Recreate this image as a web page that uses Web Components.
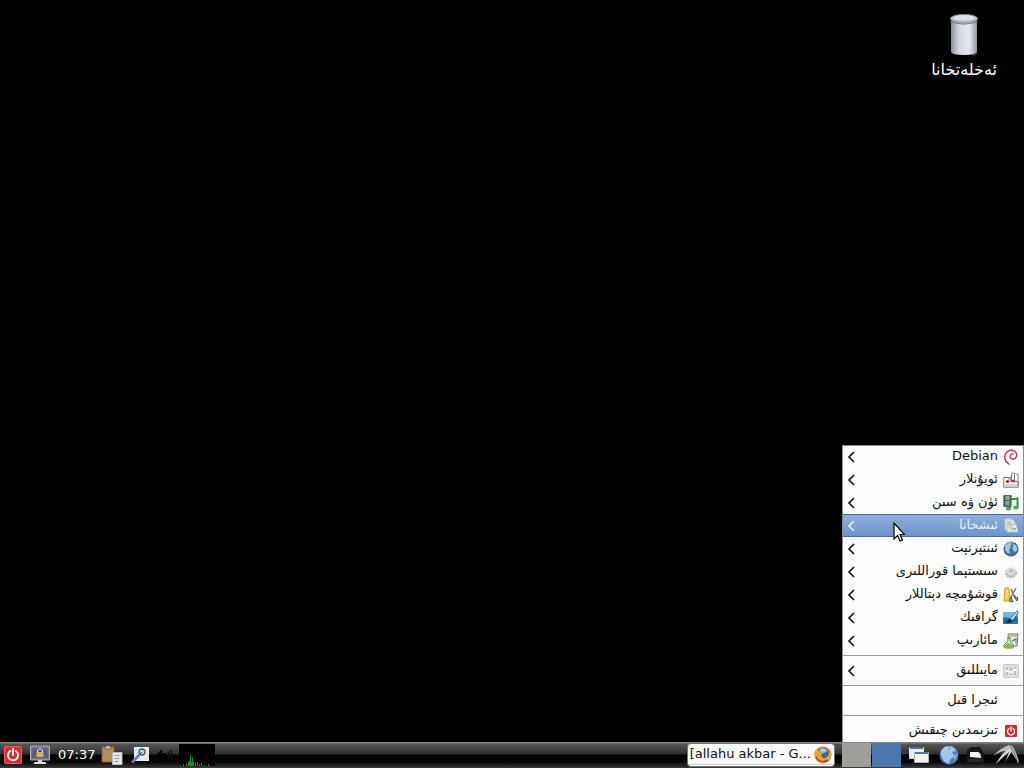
<!DOCTYPE html>
<html lang="ug" dir="rtl">
<head>
<meta charset="utf-8">
<title>LXDE</title>
<style>
html, body { margin: 0; height: 100%; background: #000; }
body { font: 13px/23px "DejaVu Sans", sans-serif; }
</style>
</head>
<body>
<lx-desktop></lx-desktop>
<script>
const ICONS = {
  debian: `<svg viewBox="0 0 16 16" fill="none" stroke="#c2325c" stroke-linecap="round"><path stroke-width="1.4" d="M5.5 14.8C1.5 12 .8 7.500 2.600 4.500 4.500 1 9.500.3 12.300 2.800c2.200 2.200 1.800 5.400-.7 6.800-1.700 1-4.600.4-4.500-1.900.1-2 1.800-3 3-2.700"/><path stroke-width=".7" d="M2 8C2 4 5 1 9 1.200M8 9.200c1 1.200 3 1 4 .2M4 13c1 1.500 1.500 2 2.500 2.500"/></svg>`,
  games: `<svg viewBox="0 0 16 16"><path d="M.8 5.500h7v4h7.500v5.700H.8z" fill="#f8f8f8" stroke="#777"/><path d="M6 10V7q0-1-1-1" fill="none" stroke="#999"/><circle cx="4.500" cy="9.500" r="1.600" fill="#c51d28"/><path d="M8.500 1.500q1.500-1.500 3 0V9h-3z" fill="#fff" stroke="#777"/><path d="M12.500 2H15v12" fill="none" stroke="#888"/><circle cx="10.300" cy="9" r="1.600" fill="#cc2635"/><path d="M2 13h12" stroke="#aaa"/></svg>`,
  media: `<svg viewBox="0 0 16 16"><path d="M.5 0h8v12h-8z" fill="#59656a"/><path d="M2.500 1h4v4h-4zM2.500 6h4v4h-4z" fill="#89a49b"/><path d="M1 1v10M8 1v10" stroke="#222" stroke-dasharray="1 1"/><path d="M6.500 4.500l8-1v9" fill="none" stroke="#318c45" stroke-width="2"/><path d="M7 4v9" stroke="#318c45" stroke-width="1.600"/><ellipse cx="5.500" cy="13.400" rx="2.600" ry="2" fill="#48a65a"/><ellipse cx="12.800" cy="12.400" rx="2.600" ry="2" fill="#48a65a"/></svg>`,
  office: `<svg viewBox="0 0 16 16"><path d="M2 1h7l3 3v8H2z" fill="#dbe2e9" stroke="#b0bfcd"/><path d="M4 4h4M4 6h4" stroke="#9eafbf"/><path d="M4 7l9-1 2 8H4z" fill="#e9e8df" stroke="#b7bec4"/><circle cx="8" cy="9" r="2.500" fill="#c8d1d1"/><path d="M9 11h4" stroke="#a6afb8" stroke-width="2"/></svg>`,
  globe: `<svg viewBox="0 0 16 16"><circle cx="8" cy="8" r="7" fill="#4776a8" stroke="#38516f"/><path d="M3 4l4-2.500 2 2-2 1 1 2-2 2 1 3-2 1-3-4zM10 3l3 1 1.500 4-2 3-2-1-1-3 1-2z" fill="#a9c6df"/><path d="M2 6a6 6 0 0 1 9-4" fill="none" stroke="#dceaf5" stroke-opacity=".7"/></svg>`,
  gear: `<svg viewBox="0 0 16 16"><ellipse cx="8" cy="9" rx="5" ry="4.300" fill="#bbb" stroke="#b5b5b5" stroke-width="2" stroke-dasharray="2 1"/><ellipse cx="8" cy="7.500" rx="5" ry="4" fill="#dadada"/><ellipse cx="8" cy="7" rx="2" ry="1.400" fill="#bbb"/></svg>`,
  tools: `<svg viewBox="0 0 16 16"><path d="M2 1h4l1 13H1z" fill="#f0d04b" stroke="#d0a62b"/><path d="M3 4h2M3 7h2M3 10h2" stroke="#fff3a0"/><path d="M8 2l4 9M13 1L8 10" stroke="#777" stroke-width="1.500"/><path d="M8 10l-2 4 4 1zM11 9l4 2-1 3z" fill="#c4a236" stroke="#5e5840"/></svg>`,
  graphics: `<svg viewBox="0 0 16 16"><path d="M0 2h15v12H0z" fill="#2c78ab"/><path d="M0 2h15v4L8 8 0 7z" fill="#79b7dc"/><path d="M1 11l7-2 6 2" stroke="#194b70" fill="none"/><path d="M6 11l2-3 6-7 1.500 1L10 10z" fill="#d5e2e8" stroke="#284759" stroke-width=".7"/><path d="M3 13l3-4 4 1-2 3z" fill="#163044"/></svg>`,
  education: `<svg viewBox="0 0 16 16"><path d="M5 1h10l-1 12H6z" fill="#eee" stroke="#72746b"/><path d="M6 3h8M13 5v6" stroke="#8b8375"/><path d="M4 5h4M5 5v3l-4 4q-1 3 2 3h6q3 0 1-3L7 8V5" fill="#e8f3df" stroke="#69834d"/><path d="M2 12l3-2 5 2q0 3-2 3H3q-2 0-1-3z" fill="#83bd48"/><path d="M9 8l4-2" stroke="#66873d" stroke-width="1.500"/></svg>`,
  prefs: `<svg viewBox="0 0 16 16"><rect x=".5" y="1.500" width="15" height="13" rx="1" fill="#dedede" stroke="#cbcbcb"/><path d="M4 4v8M8 4v8M12 4v8" stroke="#b5b5b5" stroke-width="1.500"/><path d="M2.500 8h3M6.500 9h3M10.500 7h3" stroke="#fff" stroke-width="2"/></svg>`,
  power: `<svg viewBox="0 0 16 16"><rect x=".5" y=".5" width="15" height="15" rx="1.500" fill="#d7282d" stroke="#e96263"/><path d="M5.500 4.500a4.500 4.500 0 1 0 5 0M8 2.500V8" fill="none" stroke="#fff" stroke-width="1.700" stroke-linecap="round"/></svg>`,
  logout: `<svg viewBox="0 0 16 16"><rect x="2" y="2" width="12" height="12" rx="1" fill="#d7282d"/><path d="M6 5.500a3.500 3.500 0 1 0 4 0M8 4v4" fill="none" stroke="#fff" stroke-width="1.300" stroke-linecap="round"/></svg>`,
  trash: `<svg viewBox="0 0 32 46"><defs><linearGradient id="g"><stop stop-color="#8d929e"/><stop offset=".3" stop-color="#d3d7e2"/><stop offset=".7" stop-color="#e5e8ef"/><stop offset="1" stop-color="#9599a5"/></linearGradient></defs><path d="M22 42l9-1-5 3z" fill="#333"/><path d="M3 7h26v33q-1 3-13 3T3 40z" fill="url(#g)"/><ellipse cx="16" cy="6.500" rx="13.500" ry="4" fill="#c6cad2" stroke="#8d9097"/><ellipse cx="16" cy="5.500" rx="10" ry="2.600" fill="#e0e2e7"/><path d="M3 8v2q13 4 26 0V8" fill="none" stroke="#737984"/></svg>`,
  lock: `<svg viewBox="0 0 20 20"><path d="M.5 1h19v14H.5z" fill="#77768d" stroke="#aaa9b3"/><path d="M2 3h16v10H2z" fill="#5d5b7e"/><path d="M7.500 7V5q2.500-3 5 0v2" fill="none" stroke="#ddd"/><path d="M6.500 7h7v5h-7z" fill="#c7b659"/><path d="M8 15h4v2h3q2 1 1 2H4q-1-1 1-2h3z" fill="#ddd"/></svg>`,
  clip: `<svg viewBox="0 0 22 20"><path d="M1 2h12v15H1z" fill="#b68c61" stroke="#80623f"/><path d="M4 3q0-2 2-2 1-1 2 0 2 0 2 2v1H4z" fill="#bbb" stroke="#666" stroke-width=".7"/><path d="M11.500 7.500H21v12h-9.500z" fill="#e9e9e9" stroke="#bbb"/><path d="M13.500 10.500h5M13.500 13.500h5M13.500 16.500h4" stroke="#999"/></svg>`,
  search: `<svg viewBox="0 0 20 18"><path d="M5 1h15v14H5z" fill="#e4e9ed"/><circle cx="13" cy="6" r="3" fill="#c3d7e7" stroke="#405a70" stroke-width="1.300"/><path d="M10.500 8.500L3 16.500" stroke="#6581ac" stroke-width="2.600"/><path d="M11 8l2-2" stroke="#333"/></svg>`,
  sound: `<svg viewBox="0 0 18 18"><path d="M1 9l6-6v4h4v5H7v4z" fill="#050505"/><path d="M13 6q2 3 0 6M15 4q4 5 0 10" stroke="#111" fill="none" stroke-width="1.500"/></svg>`,
  firefox: `<svg viewBox="0 0 18 18"><circle cx="9" cy="9" r="8.500" fill="#df7d24"/><circle cx="9" cy="8" r="6" fill="#386c9f"/><path d="M6 3q5-2 7 2l-3 2-4-1z" fill="#a5cade"/><path d="M1 5L4 2l1 3 4 2-2 2 2 3q4 1 6-4l1-5q3 6-1 11-6 6-12 1-4-4-2-10z" fill="#e9a13a"/><path d="M2 11q4 7 12 3" stroke="#b64221" fill="none" stroke-width="1.500"/></svg>`,
  windows: `<svg viewBox="0 0 24 20"><path d="M1.500 2.500h14v11h-14z" fill="#eee" stroke="#dbe0e9"/><path d="M2 2h13v2H2z" fill="#496da8"/><path d="M6.500 7.500h14v10h-14z" fill="#f2f2f2" stroke="#aab3c1"/><path d="M7 7h13v2H7z" fill="#5277ae"/></svg>`,
  globeBig: `<svg viewBox="0 0 22 20"><circle cx="11" cy="10" r="9.500" fill="#4b80b8"/><path d="M3 6l5-5 3 3 4-2 3 4-4 1 2 4-4 4-1 4-5-3-3-6z" fill="#a3c7e7"/><path d="M14 11l5-2-2 6z" fill="#90b9df"/><path d="M4 6q4-5 10-4" stroke="#d3e6f4" fill="none"/></svg>`,
  files: `<svg viewBox="0 0 20 20"><path d="M1 5l4-3h9l4 7v9H1z" fill="#171717"/><path d="M4 7h8q3 1 3 6l-11-1z" fill="#f2f2f2"/><path d="M2 14h15v3H2z" fill="#292929"/></svg>`,
  bird: `<svg viewBox="0 0 28 22"><path d="M1 12Q8 4 17 1l3 1q5 6 7 17-5-6-8-12Q9 6 1 12z" fill="#b9b9b9"/><path d="M17 4Q9 10 4 20q7-7 12-11l3-3zM18 6l-5 12 7-11z" fill="#d2d2d2"/><path d="M18 2q5 6 8 17" stroke="#777" fill="none"/></svg>`,
  cpu: `<svg viewBox="0 0 36 22"><path fill="#000" d="M0 0h36v22H0z"/><path d="M1.500 22v-1M4.500 22v-2M7.500 22v-2M9.500 22v-4M10.500 22v-5M11.500 22V11M12.500 22v-4M13.500 22v-9M14.500 22v-4M16.500 22v-3M18.500 22v-4M20.500 22v-2M22.500 22v-3M25.500 22v-1M29.500 22v-2" stroke="#159315"/></svg>`,
  arrow: `<svg viewBox="0 0 8 12"><path d="M7 1L2 6l5 5" fill="none" stroke="currentColor" stroke-width="1.600"/></svg>`,
  cursor: `<svg viewBox="0 0 12 20"><path d="M1 1v16l3.500-3.500L7 19l2.500-1L7 12.500h4.500z" fill="#fff" stroke="#000" stroke-width="1.200"/></svg>`
};
const define = (name, render) => customElements.define(name, class extends HTMLElement {
  constructor() { super(); this.attachShadow({ mode: "open" }); }
  connectedCallback() { this.shadowRoot.innerHTML = render(this); }
});

define("lx-icon", el => `<style>
:host { display: block; flex: none; width: 16px; height: 16px; }
svg { display: block; width: 100%; height: 100%; }
</style>${ICONS[el.getAttribute("name")]}`);

define("lx-menu-item", el => `<style>
:host { display: block; }
button { box-sizing: border-box; display: flex; align-items: center; gap: 5px; width: 100%; height: 23px; margin: 0; padding: 0 4px; border: 0; background: none; color: #111; font: inherit; line-height: 21px; text-align: start; }
:host([active]) button { background: linear-gradient(#8fb0dc, #6d92c8); color: #e6edf7; box-shadow: inset 0 1px #4b6a98, inset 0 -1px #4b6a98; }
.label { flex: 1; align-self: flex-start; white-space: nowrap; }
.space { width: 16px; }
.arrow { width: 8px; height: 12px; }
</style><button type="button" role="menuitem">${el.getAttribute("icon") ? `<lx-icon name="${el.getAttribute("icon")}"></lx-icon>` : `<span class="space"></span>`}<span class="label"><slot></slot></span>${el.hasAttribute("submenu") ? `<lx-icon class="arrow" name="arrow"></lx-icon>` : ""}</button>`);

define("lx-separator", () => `<style>
:host { display: block; padding: 3px 0; }
hr { margin: 0; border: 0; height: 1px; background: #9b9b9b; }
</style><hr>`);

define("lx-menu", () => `<style>
:host { display: block; box-sizing: border-box; width: 182px; background: #fcfcfc; border: solid #8a8a8a; border-width: 0 1px; box-shadow: inset 0 1px #8a8a8a; }
</style><div role="menu"><slot></slot></div>`);

define("lx-shortcut", () => `<style>
:host { display: block; font-size: 16px; }
a { display: flex; flex-direction: column; align-items: center; color: #fff; text-decoration: none; }
lx-icon { width: 32px; height: 46px; }
</style><a href="#trash"><lx-icon name="trash"></lx-icon><slot></slot></a>`);

define("lx-launcher", el => `<style>
:host { display: block; flex: none; }
button { display: flex; align-items: center; justify-content: center; width: 100%; height: 26px; margin: 0; padding: 0; border: 0; background: none; }
lx-icon { width: ${el.getAttribute("w")}px; height: ${el.getAttribute("h")}px; }
</style><button type="button" aria-label="${el.getAttribute("label")}"><lx-icon name="${el.getAttribute("icon")}"></lx-icon></button>`);

define("lx-task", () => `<style>
:host { display: block; flex: 0 1 149px; min-width: 0; }
button { box-sizing: border-box; display: flex; align-items: center; gap: 3px; width: 100%; height: 24px; margin: 0; padding: 0 2px; border: 1px solid #777; border-radius: 4px; background: #fafafa; color: #111; font: inherit; line-height: 20px; box-shadow: inset 0 0 0 1px #fff, inset 0 -2px 1px #ccc; }
lx-icon { width: 18px; height: 18px; }
span { flex: 1; align-self: flex-start; white-space: nowrap; text-align: left; }
</style><button type="button"><lx-icon name="firefox"></lx-icon><span dir="ltr"><slot></slot></span></button>`);

define("lx-pager", () => `<style>
:host { display: flex; flex: none; gap: 1px; width: 59px; height: 24px; }
button { flex: 1; margin: 0; padding: 0; border: 0; background: #a09e9a; }
.on { background: #4c76ad; }
</style><button type="button" class="on" aria-label="1"></button><button type="button" aria-label="2"></button>`);

define("lx-panel", () => `<style>
:host { display: block; }
nav { box-sizing: border-box; display: flex; align-items: center; justify-content: space-between; height: 26px; padding: 0 4px; background: linear-gradient(#858585 0, #858585 1px, #555 2px, #303030 12px, #030303 13px, #080808 20px, #3c3c3c 26px); color: #fff; }
.start, .end, .applets { display: flex; align-items: center; min-width: 0; }
.start { gap: 7px; }
.quick, .applets, .end { gap: 6px; }
.quick { display: flex; }
.session { display: flex; align-items: center; gap: 8px; }
time { direction: ltr; line-height: 24px; }
</style><nav>
<div class="start">
  <div class="quick">
    <lx-launcher icon="bird" w="28" h="22" label="LXDE"></lx-launcher>
    <lx-launcher icon="files" w="20" h="20" label="PCManFM"></lx-launcher>
    <lx-launcher icon="globeBig" w="22" h="20" label="Web"></lx-launcher>
    <lx-launcher icon="windows" w="24" h="20" label="Desktop"></lx-launcher>
  </div>
  <lx-pager></lx-pager>
  <lx-task>[allahu akbar - G...</lx-task>
</div>
<div class="end">
  <div class="applets">
    <lx-launcher icon="cpu" w="36" h="22" label="CPU"></lx-launcher>
    <lx-launcher icon="sound" w="18" h="18" label="Volume"></lx-launcher>
    <lx-launcher icon="search" w="20" h="18" label="Search"></lx-launcher>
    <lx-launcher icon="clip" w="22" h="20" label="Clipboard"></lx-launcher>
  </div>
  <div class="session">
    <time>07:37</time>
    <lx-launcher icon="lock" w="20" h="20" label="Lock"></lx-launcher>
    <lx-launcher icon="power" w="18" h="18" label="Log out"></lx-launcher>
  </div>
</div></nav>`);

define("lx-desktop", () => `<style>
:host { display: flex; flex-direction: column; min-height: 100vh; position: relative; overflow: hidden; background: #000; }
main { flex: 1; display: flex; align-items: flex-start; padding: 12px 27px; }
lx-menu { position: absolute; right: 0; bottom: 26px; }
.cursor { position: absolute; right: 119px; bottom: 226px; width: 12px; height: 20px; }
</style>
<main><lx-shortcut>ئەخلەتخانا</lx-shortcut></main>
<lx-menu>
  <lx-menu-item icon="debian" submenu>Debian</lx-menu-item>
  <lx-menu-item icon="games" submenu>ئويۇنلار</lx-menu-item>
  <lx-menu-item icon="media" submenu>ئۈن ۋە سىن</lx-menu-item>
  <lx-menu-item icon="office" submenu active>ئىشخانا</lx-menu-item>
  <lx-menu-item icon="globe" submenu>ئىنتېرنېت</lx-menu-item>
  <lx-menu-item icon="gear" submenu>سىستېما قوراللىرى</lx-menu-item>
  <lx-menu-item icon="tools" submenu>قوشۇمچە دېتاللار</lx-menu-item>
  <lx-menu-item icon="graphics" submenu>گرافىك</lx-menu-item>
  <lx-menu-item icon="education" submenu>مائارىپ</lx-menu-item>
  <lx-separator></lx-separator>
  <lx-menu-item icon="prefs" submenu>مايىللىق</lx-menu-item>
  <lx-separator></lx-separator>
  <lx-menu-item>ئىجرا قىل</lx-menu-item>
  <lx-separator></lx-separator>
  <lx-menu-item icon="logout">تىزىمدىن چىقىش</lx-menu-item>
</lx-menu>
<lx-panel></lx-panel>
<lx-icon class="cursor" name="cursor"></lx-icon>`);
</script>
</body>
</html>
